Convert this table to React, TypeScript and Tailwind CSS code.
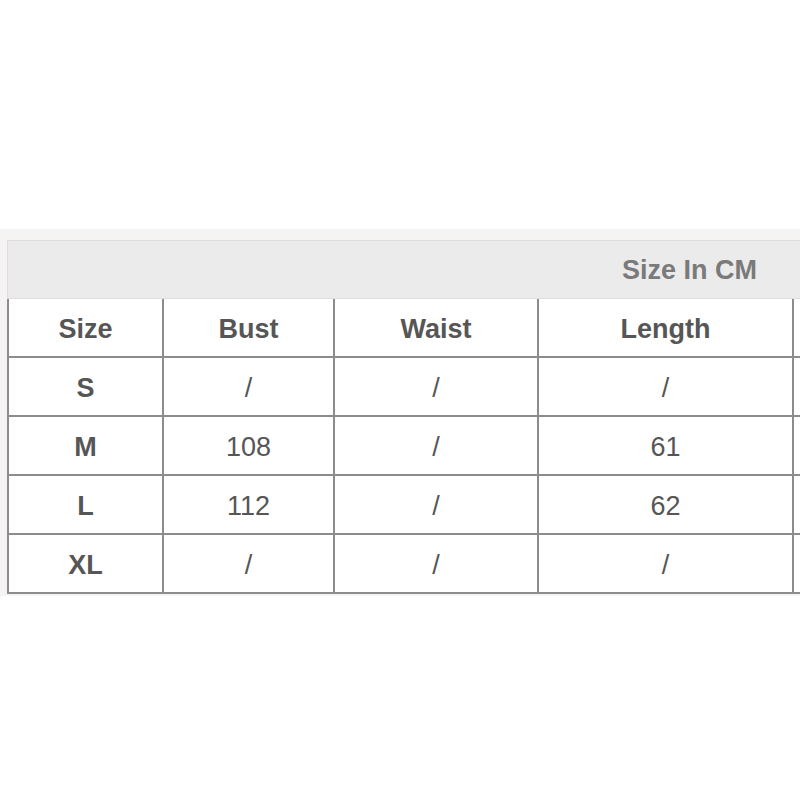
const columns = [
  { label: 'Size', width: 'w-[155px]' },
  { label: 'Bust', width: 'w-[171px]' },
  { label: 'Waist', width: 'w-[204px]' },
  { label: 'Length', width: 'w-[255px]' },
];

const rows = [
  ['S', '/', '/', '/'],
  ['M', '108', '/', '61'],
  ['L', '112', '/', '62'],
  ['XL', '/', '/', '/'],
];

function Row({ cells, head }: { cells: string[]; head?: boolean }) {
  return (
    <div className="flex h-[59px] border-b-2 border-l-2 border-[#8c8c8c] w-[1000px]">
      {cells.map((c, i) => (
        <div
          key={i}
          className={`${columns[i].width} shrink-0 flex items-center justify-center pt-[3px] border-r-2 border-[#8c8c8c] text-[27px] text-[#565656] ${
            head || i === 0 ? 'font-bold' : 'font-normal'
          }`}
        >
          {c}
        </div>
      ))}
      <div className="flex-1" />
    </div>
  );
}

export default function App() {
  return (
    <div className="w-[800px] h-[800px] bg-white overflow-hidden font-['Liberation_Sans',Arial,sans-serif]">
      <div className="h-[229px]" />
      <div className="bg-[#f6f4f2] pt-[11px] pl-[7px] pb-[2px]">
        <div className="w-[1000px] h-[59px] bg-[#ebebeb] border border-[#dedede] flex items-center pl-[614px] pt-[2px]">
          <span className="text-[27px] font-bold text-[#7a7a7a]">Size In CM</span>
        </div>
        <div className="bg-white w-[1000px]">
          <Row cells={columns.map(c => c.label)} head />
          {rows.map((r, i) => (
            <Row key={i} cells={r} />
          ))}
        </div>
      </div>
    </div>
  );
}
